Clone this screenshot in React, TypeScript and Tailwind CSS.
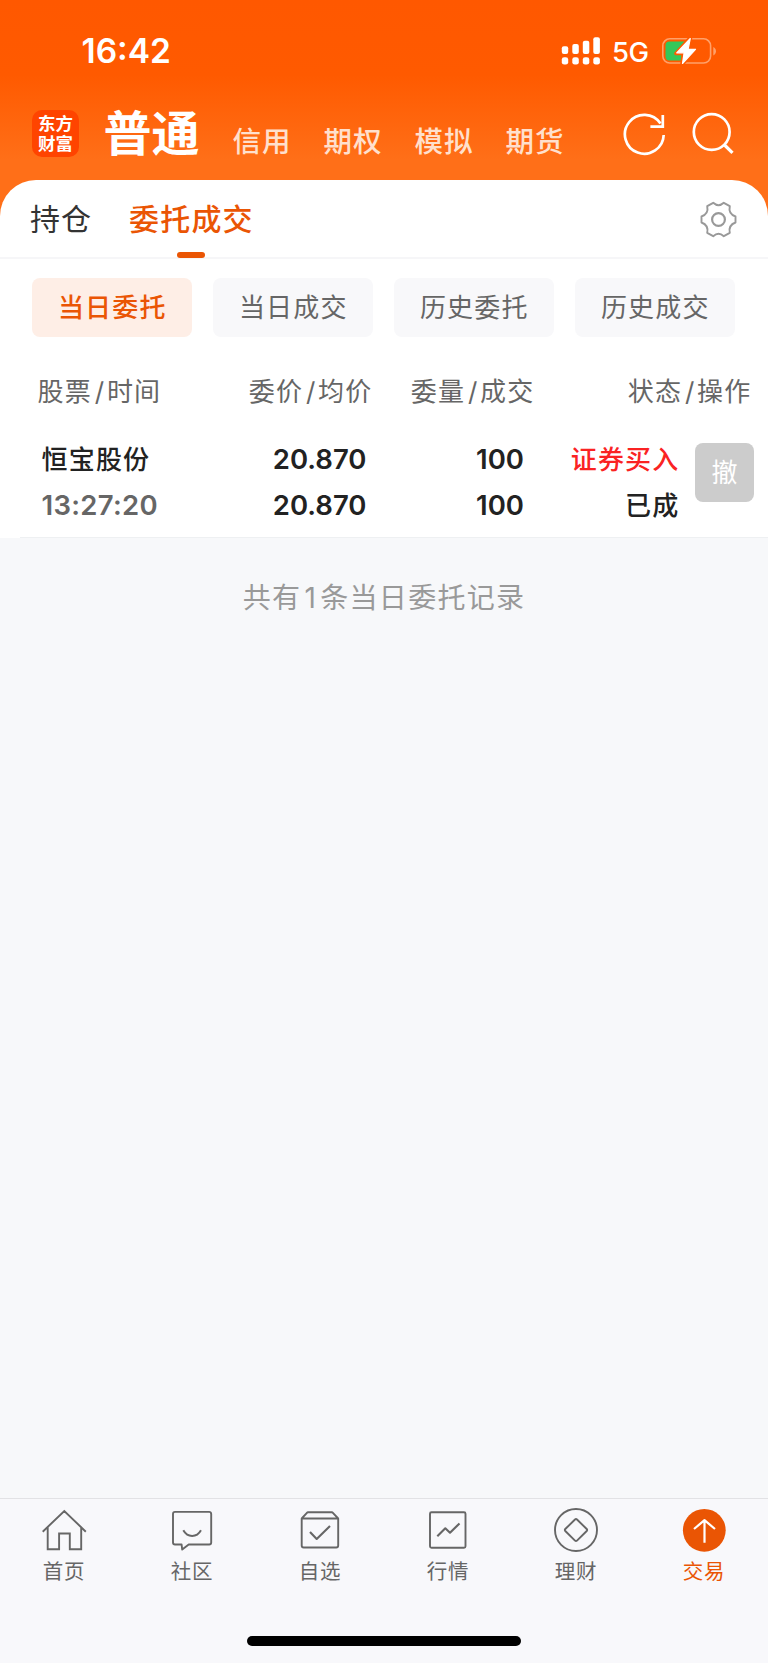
import type { ReactNode } from 'react';

const CJK = "font-['Inter','Noto_Sans_CJK_SC',sans-serif]";

function StatusBar() {
  return (
    <div className="flex h-[102px] items-center justify-between pr-[51px] pl-[81.500px] text-white">
      <span className="font-['Inter',sans-serif] text-[33.500px] leading-10 font-semibold tracking-[0px]">16:42</span>
      <div className="flex items-center">
        <svg width="40" height="30" viewBox="561 36 40 30" fill="#fff">
          <rect x="561.8" y="46.2" width="6.4" height="7.8" rx="2" />
          <rect x="572.3" y="44" width="6.5" height="10" rx="2" />
          <rect x="582.8" y="40.7" width="6.5" height="13.3" rx="2" />
          <rect x="593.3" y="37.3" width="6.6" height="16.7" rx="2" />
          <rect x="561.8" y="57.2" width="6.4" height="7.4" rx="2.4" />
          <rect x="572.3" y="57.2" width="6.5" height="7.4" rx="2.4" />
          <rect x="582.8" y="57.2" width="6.5" height="7.4" rx="2.4" />
          <rect x="593.3" y="57.2" width="6.6" height="7.4" rx="2.4" />
        </svg>
        <span className="mt-[2px] ml-[11px] w-[38px] font-['Inter',sans-serif] text-[27.500px] leading-8 font-medium tracking-[-0.600px]">5G</span>
        <svg className="ml-[11px]" width="56" height="30" viewBox="661 36 56 30" fill="none">
          <rect x="662.8" y="38.8" width="47.8" height="24.2" rx="7" stroke="#ffa16a" strokeWidth="1.6" />
          <path d="M713.300 47v8.400c1.600-.700 2.700-2.300 2.700-4.200s-1.100-3.500-2.700-4.200z" fill="#ffa16a" />
          <path d="M669.500 41.500H690L681 60.500H669.500a4 4 0 0 1-4-4v-11a4 4 0 0 1 4-4z" fill="#34c759" />
          <path d="M690.500 37.500L676 53.500h7.300L682 64.500 696.500 48.500h-7.300z" fill="#fff" stroke="#ff5a00" strokeWidth="3.600" strokeLinejoin="round" />
          <path d="M690.300 38.500L676.700 52.800h7.400L682.500 63.500 695.500 49.300h-7.400z" fill="#fff" stroke="#fff" strokeWidth="1.200" strokeLinejoin="round" />
        </svg>
      </div>
    </div>
  );
}

function AccountTabs() {
  return (
    <div className="flex h-[77.500px] items-start pl-[32px] text-white">
      <div className="mt-[8px] flex size-[47px] flex-col items-center justify-center rounded-[10px] bg-[#ff4400] text-[17.500px] leading-[20px] font-bold">
        <span>东方</span>
        <span>财富</span>
      </div>
      <h1 className="mt-[2px] ml-[24.500px] w-[97px] text-[48px] leading-[60px] font-bold">普通</h1>
      <nav className="mt-px ml-[32px] flex gap-[32px] text-[28.500px] font-medium tracking-[1px] text-[#ffe0cd]">
        <span className="mt-[19px] leading-[40px]">信用</span>
        <span className="mt-[19px] leading-[40px]">期权</span>
        <span className="mt-[19px] leading-[40px]">模拟</span>
        <span className="mt-[19px] leading-[40px]">期货</span>
      </nav>
      <svg className="mt-[8px] ml-auto shrink-0" width="44" height="48" viewBox="622 110 44 48" fill="none" stroke="#fff" strokeWidth="2.700">
        <path d="M663.700 135A19.400 19.400 0 1 1 660.500 123.600" />
        <path d="M662.800 115v11.700h-12.400" />
      </svg>
      <svg className="mt-[8px] mr-[32px] ml-[24px] shrink-0" width="46" height="48" viewBox="690 110 46 48" fill="none" stroke="#fff" strokeWidth="2.700">
        <circle cx="711.700" cy="132" r="17.900" />
        <path d="M724 144.500l8.500 8.300" strokeWidth="3.200" />
      </svg>
    </div>
  );
}

function SectionTabs() {
  return (
    <div className="flex h-[79px] items-start border-b-2 border-[#f6f6f8] pl-[30px] text-[30px] leading-[44px]">
      <span className="mt-[17px] tracking-[1px] text-[#333]">持仓</span>
      <div className="ml-[37px] flex flex-col items-center">
        <span className="mt-[17px] font-medium tracking-[1.200px] text-[#ea5504]">委托成交</span>
        <span className="mt-[11.500px] mr-px h-[6px] w-[28px] rounded-[3px] bg-[#ea5504]" />
      </div>
      <svg className="mt-[21px] mr-[31px] ml-auto" width="37" height="37" viewBox="-18.500 -18.500 37 37" fill="none" stroke="#999" strokeWidth="1.900" strokeLinejoin="round">
        <circle r="6.400" strokeWidth="2.200" />
        <path d="M-5.300-16.700Q0-11.800 5.300-16.700L11.300-13.300Q9.600-5.800 17-3V3Q9.600 5.800 11.300 13.300L5.300 16.700Q0 11.800-5.300 16.700L-11.300 13.300Q-9.600 5.800-17 3V-3Q-9.600-5.800-11.300-13.300Z" />
      </svg>
    </div>
  );
}

function Filters() {
  const base = 'flex h-[59px] w-[160px] items-center justify-center rounded-[8px] text-[26px] tracking-[1.200px]';
  return (
    <div className="flex justify-between pt-[19.500px] pr-[32.700px] pl-[32.300px]">
      <button className={`${base} bg-[#feeee6] font-medium text-[#ea5504]`}>当日委托</button>
      <button className={`${base} bg-[#f8f8fa] text-[#666]`}>当日成交</button>
      <button className={`${base} bg-[#f8f8fa] text-[#666]`}>历史委托</button>
      <button className={`${base} bg-[#f8f8fa] text-[#666]`}>历史成交</button>
    </div>
  );
}

function Heading({ a, b }: { a: string; b: string }) {
  return (
    <span className="flex tracking-[1.200px]">
      {a}
      <span className="w-[15px] text-center tracking-normal">/</span>
      {b}
    </span>
  );
}

function Orders() {
  return (
    <>
      <div className="grid h-[98px] grid-cols-[205px_130px_162px_217px] items-center pt-[11px] pl-[37.500px] text-[26px] text-[#666]">
        <Heading a="股票" b="时间" />
        <div className="flex justify-end"><Heading a="委价" b="均价" /></div>
        <div className="flex justify-end"><Heading a="委量" b="成交" /></div>
        <div className="flex justify-end"><Heading a="状态" b="操作" /></div>
      </div>
      <div className="flex h-[101.500px] pl-[41.500px] text-[26px] leading-[45.500px] font-medium text-[#222]">
        <div className="w-[170px] pt-[2px]">
          <p className="tracking-[1.200px]">恒宝股份</p>
          <p className="text-[27.500px] font-semibold tracking-[0.300px] text-[#666]">13:27:20</p>
        </div>
        <div className="w-[155px] pt-[2px] text-right text-[27.500px] font-semibold">
          <p>20.870</p>
          <p>20.870</p>
        </div>
        <div className="w-[157.500px] pt-[2px] text-right text-[27.500px] font-semibold">
          <p>100</p>
          <p>100</p>
        </div>
        <div className="w-[155.500px] pt-[2px] text-right tracking-[1.200px]">
          <p className="text-[#fa2323]">证券买入</p>
          <p>已成</p>
        </div>
        <button className="mt-[7.500px] ml-[15.500px] flex size-[59px] items-center justify-center rounded-[8px] bg-[#ccc] pt-[2px] text-[26px] font-normal text-white">
          撤
        </button>
      </div>
      <div className="ml-[20px] h-px bg-[#eef0f2]" />
    </>
  );
}

function NavItem({ label, active, children }: { label: string; active?: boolean; children: ReactNode }) {
  return (
    <div className={`flex flex-1 flex-col items-center pt-[5px] ${active ? 'text-[#ea5504]' : 'text-[#666]'}`}>
      <svg width="48" height="48" viewBox="0 0 48 48" fill="none" stroke="currentColor" strokeWidth="1.900" strokeLinejoin="round">
        {children}
      </svg>
      <span className="mt-[5px] text-[20.500px] leading-[30px] tracking-[0.700px]">{label}</span>
    </div>
  );
}

function BottomNav() {
  return (
    <footer className="flex h-[165px] flex-col items-center justify-between border-t border-[#e2e2e5] bg-[#f8f8fb] pb-[17px]">
      <nav className="flex w-full">
        <NavItem label="首页">
          <path d="M2.700 27.700L24.300 7l21.500 20.700M7.700 23.300v22h11.400V29.500h10.700v15.800H41.200v-22" strokeLinejoin="miter" />
        </NavItem>
        <NavItem label="社区">
          <path d="M7 7.900h34.200a2 2 0 0 1 2 2v28.600a2 2 0 0 1-2 2H20.700L14.200 45.600l-.6-5.100H7a2 2 0 0 1-2-2V9.900a2 2 0 0 1 2-2z" />
          <path d="M15.300 26.300c4.400 7.600 13.300 7.600 17.700 0" strokeWidth="2" />
        </NavItem>
        <NavItem label="自选">
          <path d="M5.700 14.500h36.500v27a2 2 0 0 1-2 2H7.700a2 2 0 0 1-2-2zL10.900 8.900a1.500 1.500 0 0 1 1.200-.7h23.600a1.500 1.500 0 0 1 1.200.7l5.300 5.600" />
          <path d="M14 28l6.700 7L34 22" strokeWidth="2.100" />
        </NavItem>
        <NavItem label="行情">
          <rect x="6" y="8.200" width="35.500" height="35.500" rx="1.500" />
          <path d="M13.300 32.200l8-7.900 4.700 4.400 9.500-9.300" strokeWidth="2.100" />
        </NavItem>
        <NavItem label="理财">
          <circle cx="24" cy="26" r="21" />
          <path d="M23 15.500a1.500 1.500 0 0 1 2 0L34.700 25a1.500 1.500 0 0 1 0 2L25 36.600a1.500 1.500 0 0 1-2 0L13.300 27a1.500 1.500 0 0 1 0-2z" />
        </NavItem>
        <NavItem label="交易" active>
          <circle cx="24.300" cy="26.300" r="21.400" fill="currentColor" stroke="none" />
          <path d="M14 25l10.500-8.800L35 25M24.500 16v22.700" stroke="#fff" strokeWidth="2.200" />
        </NavItem>
      </nav>
      <div className="h-[10px] w-[274px] rounded-full bg-black" />
    </footer>
  );
}

export default function App() {
  return (
    <div lang="zh-CN" className={`flex h-[1663px] w-[768px] flex-col overflow-hidden bg-[#f7f8fa] ${CJK}`}>
      <div className="bg-[linear-gradient(180deg,#ff5800_0px,#ff5a00_75px,#ff6f18_160px,#ff6f18_230px)]">
        <StatusBar />
        <AccountTabs />
        <main className="rounded-t-[36px] bg-white">
          <SectionTabs />
          <Filters />
          <Orders />
        </main>
      </div>
      <p className="mt-[38px] flex flex-1 justify-center text-[28px] leading-[44px] tracking-[1.300px] text-[#999]">
        共有<span className="w-[19px] text-center">1</span>条当日委托记录
      </p>
      <BottomNav />
    </div>
  );
}
